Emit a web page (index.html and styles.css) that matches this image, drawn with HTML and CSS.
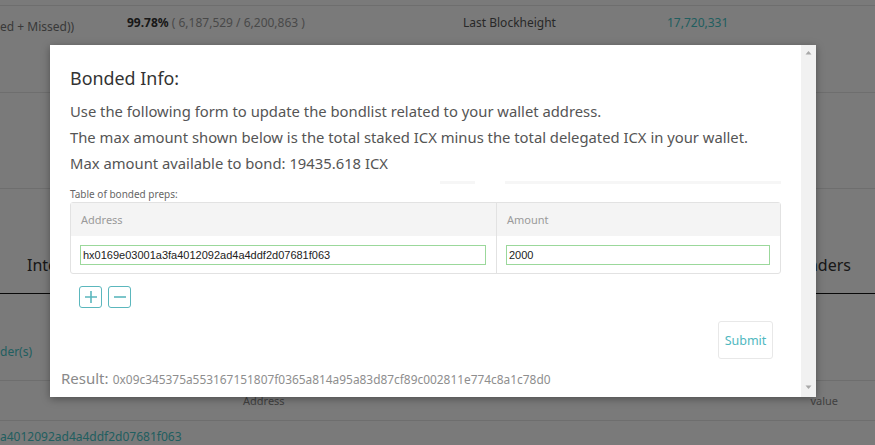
FILE: index.html
```html
<!DOCTYPE html>
<html>
<head>
<meta charset="utf-8">
<link rel="stylesheet" href="styles.css">
</head>
<body>
<div class="page">
  <div class="row row-stats">
    <div class="cell c1 note">ed + Missed))</div>
    <div class="cell c2"><b>99.78%</b> <span class="muted">( 6,187,529 / 6,200,863 )</span></div>
    <div class="cell c3">Last Blockheight</div>
    <div class="cell c4 teal">17,720,331</div>
  </div>
  <div class="row row-empty"></div>
  <div class="section-head">
    <span class="tab">Interface</span>
    <span class="tab tab-right">Bonders</span>
  </div>
  <div class="row row-bonder"><span class="teal">der(s)</span></div>
  <div class="row row-th"><span class="th-addr">Address</span><span class="th-val">value</span></div>
  <div class="row row-td"><span class="teal">a4012092ad4a4ddf2d07681f063</span></div>
</div>

<div class="overlay">
  <div class="modal">
    <div class="modal-body">
      <h2 class="title">Bonded Info:</h2>
      <p class="line">Use the following form to update the bondlist related to your wallet address.</p>
      <p class="line">The max amount shown below is the total staked ICX minus the total delegated ICX in your wallet.</p>
      <p class="line">Max amount available to bond: 19435.618 ICX</p>
      <div class="ghost"><span class="g1"></span><span class="g2"></span></div>
      <div class="table-label">Table of bonded preps:</div>
      <div class="bond-table">
        <div class="bt-head">
          <div class="bt-col col-addr">Address</div>
          <div class="bt-col col-amt">Amount</div>
        </div>
        <div class="bt-row">
          <div class="bt-col col-addr"><input class="field" value="hx0169e03001a3fa4012092ad4a4ddf2d07681f063"></div>
          <div class="bt-col col-amt"><input class="field" value="2000"></div>
        </div>
      </div>
      <div class="row-btns">
        <button class="sq-btn" aria-label="add"><svg width="14" height="14" viewBox="0 0 14 14"><path d="M7 1v12M1 7h12" stroke="#5bb7bd" stroke-width="1.6" fill="none"/></svg></button>
        <button class="sq-btn" aria-label="remove"><svg width="14" height="14" viewBox="0 0 14 14"><path d="M1 7h12" stroke="#5bb7bd" stroke-width="1.6" fill="none"/></svg></button>
      </div>
      <div class="submit-row"><button class="submit">Submit</button></div>
      <div class="result"><span class="result-label">Result:</span> <span class="result-hash">0x09c345375a553167151807f0365a814a95a83d87cf89c002811e774c8a1c78d0</span></div>
    </div>
    <div class="scrollbar">
      <svg width="15" height="10" viewBox="0 0 15 10"><path d="M4.5 6.5h6l-3-3.5z" fill="#a8a8a8"/></svg>
      <svg width="15" height="10" viewBox="0 0 15 10"><path d="M4.5 3.5h6l-3 3.5z" fill="#a8a8a8"/></svg>
    </div>
  </div>
</div>
</body>
</html>
```

FILE: styles.css
```css
* { box-sizing: border-box; }
html, body { margin: 0; padding: 0; }
body {
  width: 875px;
  height: 445px;
  overflow: hidden;
  background: #fff;
  font-family: "Noto Sans", "Open Sans", sans-serif;
  color: #555;
  position: relative;
}
.page { padding-top: 5px; }
.row { display: flex; border-top: 1px solid #e6e6e6; }
.row-stats { height: 87px; font-size: 12px; }
.cell { padding-top: 8px; }
.c1 { width: 110px; padding-top: 12px; color: #777; }
.c2 { width: 353px; padding-left: 17px; color: #555; }
.c2 b { font-weight: 700; color: #333; }
.muted { color: #999; }
.c3 { width: 204px; color: #555; }
.c4 { flex: 1; }
.teal { color: #45c6c8; }
.row-empty { height: 96px; }
.section-head {
  height: 106px;
  display: flex;
  justify-content: space-between;
  align-items: flex-end;
  padding: 0 24px 17px 27px;
  border-top: 1px solid #e6e6e6;
  border-bottom: 1px solid #111;
  font-size: 16px;
  color: #333;
}
.row-bonder { height: 86px; align-items: flex-end; padding-bottom: 20px; border-top: none; font-size: 12px; }
.row-th { height: 40px; font-size: 11px; color: #888; align-items: center; }
.th-addr { margin-left: 243px; }
.th-val { margin-left: auto; margin-right: 37px; }
.row-td { height: 40px; font-size: 12px; padding-top: 7px; }

.overlay {
  position: absolute;
  inset: 0;
  background: rgba(0, 0, 0, 0.52);
}
.modal {
  position: absolute;
  left: 50px;
  top: 45px;
  width: 766px;
  height: 352px;
  background: #fff;
  box-shadow: 0 2px 8px rgba(0,0,0,0.35);
  display: flex;
}
.modal-body {
  flex: 1;
  height: 100%;
  overflow: hidden;
  padding: 0 20px 0 20px;
}
.scrollbar {
  width: 15px;
  height: 100%;
  background: #f1f1f1;
  display: flex;
  flex-direction: column;
  justify-content: space-between;
  padding: 3px 0 5px;
}
.scrollbar svg { display: block; }
.title {
  margin: 0;
  padding-top: 21px;
  font-size: 17.9px;
  font-weight: 400;
  color: #333;
  line-height: 24px;
}
.line {
  margin: 0;
  font-size: 14.8px;
  line-height: 26px;
  color: #555;
}
.title + .line { margin-top: 8px; }
.ghost { display: flex; height: 11px; gap: 30px; padding-left: 370px; }
.ghost span { display: block; height: 3px; background: #f6f6f6; margin-top: 5px; }
.g1 { width: 35px; }
.g2 { width: 276px; }
.table-label { font-size: 10px; color: #666; line-height: 14px; margin-top: 0; }
.bond-table {
  border: 1px solid #e2e2e2;
  border-radius: 3px;
  margin-top: 1px;
}
.bt-head { display: flex; height: 33px; background: #f4f4f4; }
.bt-head .bt-col { font-size: 11px; color: #9a9a9a; padding: 9px 0 0 10px; }
.bt-row { display: flex; height: 37px; }
.bt-row .bt-col { padding: 9px 10px 0 9px; }
.col-addr { width: 426px; border-right: 1px solid #e2e2e2; }
.col-amt { flex: 1; }
.field {
  display: block;
  width: 100%;
  height: 20px;
  border: 1px solid #9bd89b;
  padding: 0 2px;
  font-family: "Liberation Sans", Arial, sans-serif;
  font-size: 11px;
  color: #222;
  outline: none;
  background: #fff;
}
.row-btns { display: flex; gap: 6px; margin-top: 12px; padding-left: 9px; }
.sq-btn {
  width: 23px;
  height: 22px;
  padding: 0;
  border: 1px solid #5bb7bd;
  border-radius: 3px;
  background: #fff;
  display: flex;
  align-items: center;
  justify-content: center;
}
.submit-row { display: flex; justify-content: flex-end; padding-right: 8px; margin-top: 13px; }
.submit {
  width: 55px;
  height: 38px;
  border: 1px solid #e8e8e8;
  border-radius: 3px;
  background: #fff;
  color: #4fb8c0;
  font-family: "Noto Sans", "Open Sans", sans-serif;
  font-size: 12.5px;
  padding: 0;
}
.result { margin-left: -9px; margin-top: 8px; white-space: nowrap; line-height: 22px; }
.result-label { font-size: 15px; color: #8a8a8a; }
.result-hash { font-size: 11.9px; color: #8e8e8e; }
```
